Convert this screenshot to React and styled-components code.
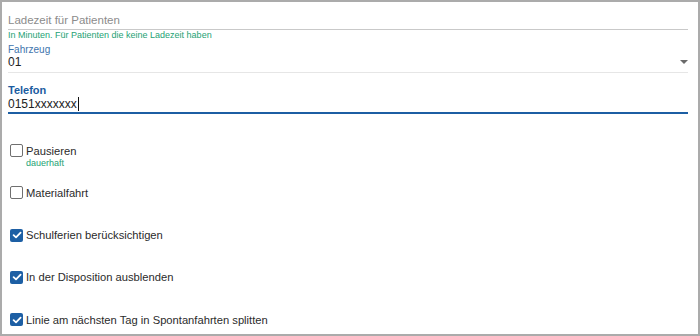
import React from 'react';
import styled, { createGlobalStyle } from 'styled-components';

const GlobalStyle = createGlobalStyle`
	html, body {
		margin: 0;
		padding: 0;
		background: #ffffff;
	}
	body {
		font-family: "Liberation Sans", Arial, sans-serif;
		color: #333333;
	}
`;

const Frame = styled.div`
	box-sizing: border-box;
	width: 700px;
	height: 336px;
	border: 2px solid #ababab;
	padding: 8px 10px 0 6px;
	background: #ffffff;
	overflow: hidden;
`;

const TextField = styled.div`
	display: flex;
	align-items: center;
	height: 19px;
	border-bottom: 1px solid #c9c9c9;
	font-size: 11.5px;
	color: ${props => (props.placeholder ? '#8c8c8c' : '#333333')};
`;

const Hint = styled.div`
	font-size: 9px;
	line-height: 11px;
	color: #25a274;
	margin-top: ${props => props.top || 0}px;
`;

const FieldLabel = styled.div`
	font-size: ${props => (props.active ? 11 : 10)}px;
	line-height: 12px;
	margin-top: ${props => props.top}px;
	color: ${props => (props.active ? '#1b5c9f' : '#3e74ad')};
	font-weight: ${props => (props.active ? 700 : 400)};
`;

const SelectValue = styled.div`
	display: flex;
	align-items: center;
	justify-content: space-between;
	height: 12px;
	padding: 0 0 4px 0;
	border-bottom: 1px solid #e6e6e6;
	font-size: 12px;
	color: #222222;
`;

const Caret = styled.span`
	width: 0;
	height: 0;
	border-left: 4px solid transparent;
	border-right: 4px solid transparent;
	border-top: 4px solid #6a6a6a;
`;

const PhoneInput = styled.div`
	display: flex;
	align-items: center;
	height: 16px;
	border-bottom: 2px solid #1c5ea3;
	font-size: 12px;
	color: #222222;
`;

const Cursor = styled.span`
	display: inline-block;
	width: 1px;
	height: 14px;
	background: #111111;
	margin-left: 1px;
`;

const CheckList = styled.div`
	margin-top: 30px;
	padding-left: 2px;
`;

const CheckRow = styled.div`
	height: 42.3px;
	display: flex;
	align-items: flex-start;
	gap: 3px;
`;

const Box = styled.span`
	box-sizing: border-box;
	flex: none;
	width: 13px;
	height: 13px;
	border-radius: 2px;
	border: ${props => (props.checked ? 'none' : '1.5px solid #6f6f6f')};
	background: ${props => (props.checked ? '#1d5fa4' : '#ffffff')};
	display: flex;
	align-items: center;
	justify-content: center;
`;

const CheckText = styled.div`
	font-size: 11.2px;
	line-height: 14px;
	color: #2b2b2b;
	margin-top: -0.5px;
`;

const Tick = () => (
	<svg width="10" height="10" viewBox="0 0 10 10">
		<path d="M1.6 5.2 L4 7.4 L8.6 2.6" fill="none" stroke="#ffffff" strokeWidth="1.8" strokeLinecap="round" strokeLinejoin="round" />
	</svg>
);

const CheckItem = ({ label, hint, checked }) => (
	<CheckRow>
		<Box checked={checked}>{checked && <Tick />}</Box>
		<div>
			<CheckText>{label}</CheckText>
			{hint && <Hint>{hint}</Hint>}
		</div>
	</CheckRow>
);

const options = [
	{ label: 'Pausieren', hint: 'dauerhaft', checked: false },
	{ label: 'Materialfahrt', checked: false },
	{ label: 'Schulferien berücksichtigen', checked: true },
	{ label: 'In der Disposition ausblenden', checked: true },
	{ label: 'Linie am nächsten Tag in Spontanfahrten splitten', checked: true },
];

const App = () => {
	return (
		<>
			<GlobalStyle />
			<Frame>
				<TextField placeholder="true">Ladezeit für Patienten</TextField>
				<Hint top={0}>In Minuten. Für Patienten die keine Ladezeit haben</Hint>
				<FieldLabel top={3}>Fahrzeug</FieldLabel>
				<SelectValue>
					<span>01</span>
					<Caret />
				</SelectValue>
				<FieldLabel top={11} active>Telefon</FieldLabel>
				<PhoneInput>
					0151xxxxxxx
					<Cursor />
				</PhoneInput>
				<CheckList>
					{options.map((option, key) => (
						<CheckItem key={key} {...option} />
					))}
				</CheckList>
			</Frame>
		</>
	);
};

export default App;
